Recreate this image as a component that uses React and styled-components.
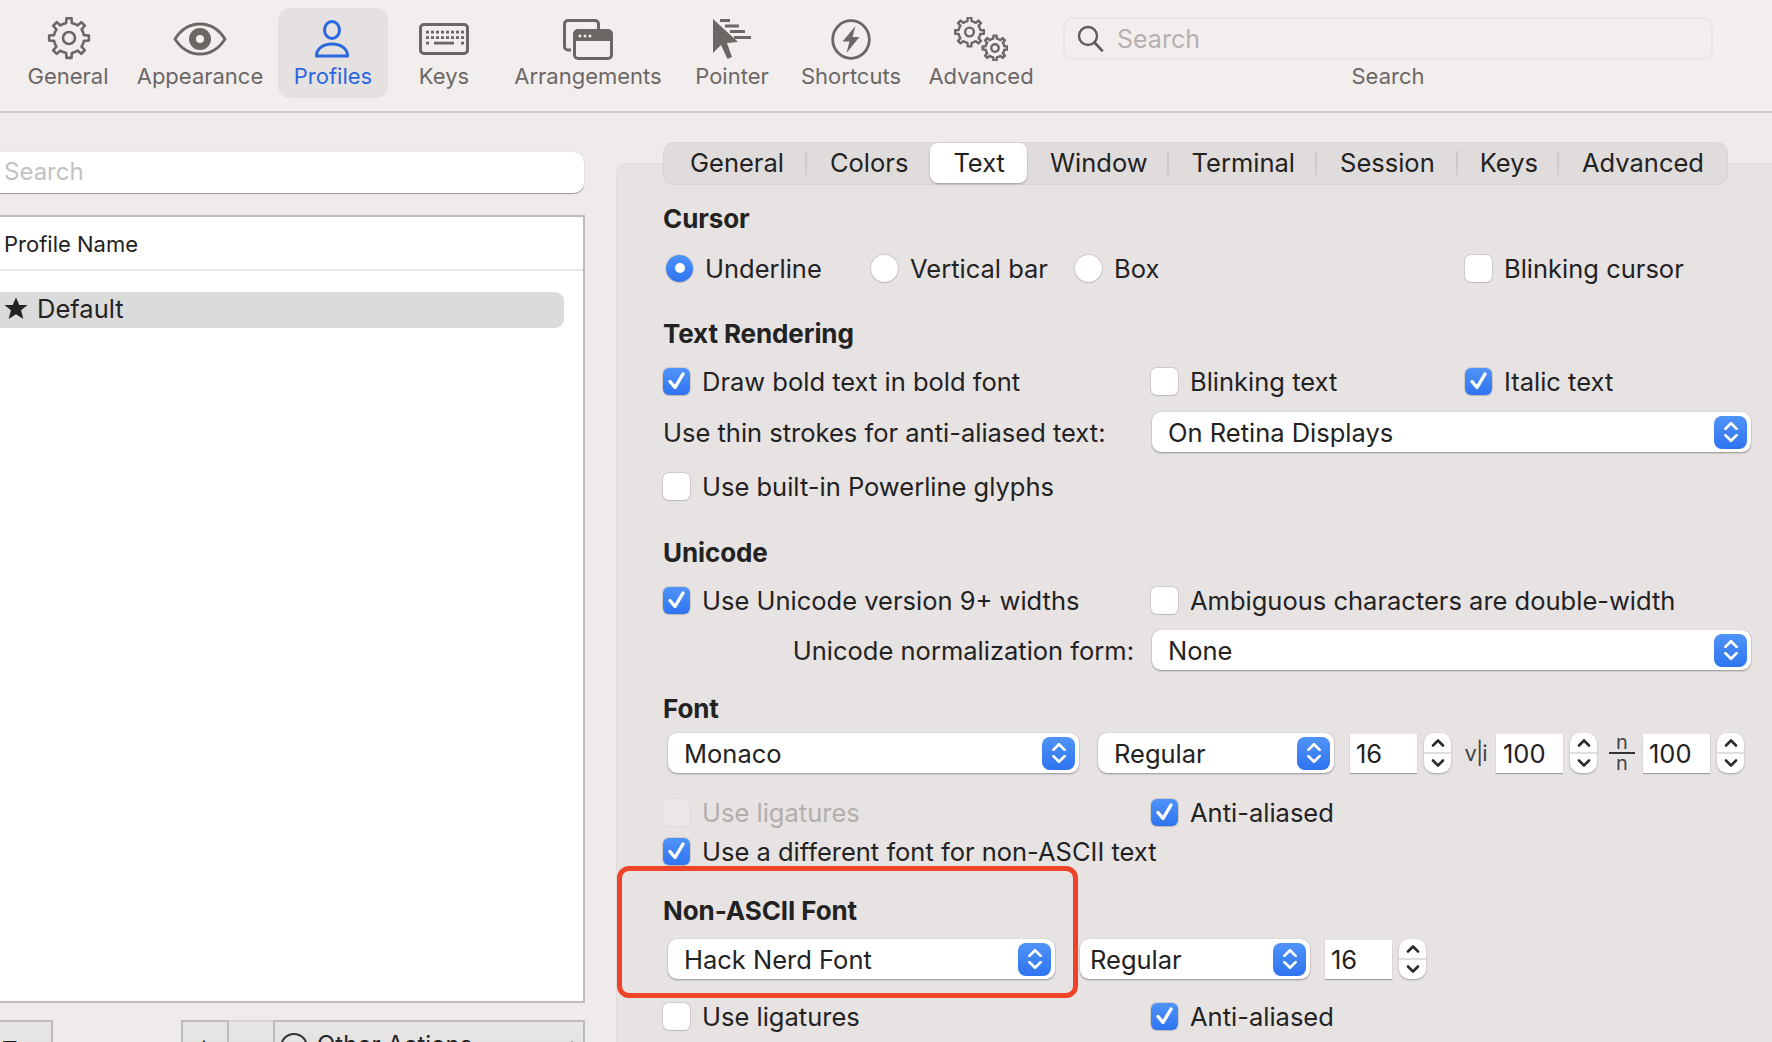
import React from "react";
import styled, { createGlobalStyle } from "styled-components";

const GlobalStyle = createGlobalStyle`
  html, body { margin: 0; padding: 0; background: #efebea; }
  * { box-sizing: border-box; }
`;

const Page = styled.div`
  width: 1772px;
  height: 1042px;
  overflow: hidden;
  display: flex;
  flex-direction: column;
  background: #efebea;
  color: #232222;
  font-family: Inter, "Noto Sans", sans-serif;
  font-size: 25.5px;
`;

const Toolbar = styled.div`
  height: 113px;
  flex: none;
  display: flex;
  padding: 8px 0 0 8px;
  background: #f3eeee;
  border-bottom: 2px solid #d0cccb;
`;

const ToolItem = styled.div`
  width: ${(p) => p.$w}px;
  margin-left: ${(p) => p.$ml || 0}px;
  height: 90px;
  display: flex;
  flex-direction: column;
  align-items: center;
  border-radius: 12px;
  background: ${(p) => (p.$active ? "#e6e1e1" : "transparent")};
  color: ${(p) => (p.$active ? "#2a68e0" : "#6b6765")};
  font-size: 22px;
`;

const ToolIcon = styled.div`
  height: 54px;
  padding-top: 8px;
  display: flex;
  align-items: center;
  justify-content: center;
`;

const ToolLabel = styled.div`
  line-height: 28px;
  white-space: nowrap;
`;

const ToolSearch = styled.div`
  width: 650px;
  margin-left: 15px;
  display: flex;
  flex-direction: column;
  align-items: center;
  padding-top: 9px;
  color: #6b6765;
  font-size: 22px;
`;

const ToolSearchField = styled.div`
  width: 100%;
  height: 43px;
  display: flex;
  align-items: center;
  gap: 13px;
  padding-left: 12px;
  border: 2px solid #e9e5e4;
  border-radius: 9px;
  color: #b5b1b0;
  font-size: 25px;
  margin-bottom: 2px;
`;

const Main = styled.div`
  flex: 1;
  display: flex;
  min-height: 0;
`;

const Sidebar = styled.div`
  width: 585px;
  flex: none;
  padding-top: 39px;
  display: flex;
  flex-direction: column;
`;

const SideSearch = styled.div`
  height: 41px;
  flex: none;
  padding: 0 0 2px 4px;
  display: flex;
  align-items: center;
  background: #fff;
  border-radius: 0 10px 10px 0;
  box-shadow: 0 1px 1px rgba(0, 0, 0, 0.35), 0 0 1px rgba(0, 0, 0, 0.15);
  color: #c3c1c0;
  width: 584px;
  font-size: 24px;
`;

const ProfileTable = styled.div`
  margin-top: 22px;
  height: 788px;
  flex: none;
  background: #fff;
  border: 2px solid #bdbcbb;
  border-left: none;
`;

const TableHead = styled.div`
  height: 54px;
  padding: 2px 0 0 4px;
  display: flex;
  align-items: center;
  border-bottom: 2px solid #e6e6e6;
  font-size: 22px;
`;

const ProfileRow = styled.div`
  margin: 21px 19px 0 0;
  height: 36px;
  padding: 0 0 3px 4px;
  display: flex;
  align-items: center;
  gap: 9px;
  background: #dbdbdb;
  border-radius: 0 9px 9px 0;
  font-size: 25.5px;
`;

const BottomBar = styled.div`
  margin-top: 17px;
  flex: none;
  display: flex;
`;

const BarButton = styled.div`
  width: ${(p) => p.$w}px;
  margin-left: ${(p) => p.$ml || 0}px;
  height: 40px;
  flex: none;
  display: flex;
  align-items: flex-start;
  gap: 9px;
  padding: ${(p) => p.$top || 8}px 0 0 ${(p) => p.$pad || 0}px;
  background: linear-gradient(#e9e7e6, #e2e0df);
  border: 2px solid #bdbcbb;
  border-top-color: ${(p) => (p.$disabled ? "#d6d4d3" : "#bdbcbb")};
  border-left-width: ${(p) => (p.$noLeft ? 0 : 2)}px;
  border-right-width: ${(p) => (p.$noRight ? 0 : 2)}px;
  white-space: nowrap;
  font-size: 24px;
`;

const BarRing = styled.span`
  width: 28px;
  height: 28px;
  margin-top: 3px;
  border: 2px solid #333;
  border-radius: 50%;
  flex: none;
`;

const BarChevron = styled.span`
  margin: 9px 5px 0 auto;
  display: flex;
`;

const Panel = styled.div`
  flex: 1;
  margin: 50px 0 0 31px;
  padding-left: 46px;
  background: #e7e3e2;
  border: 1px solid #e0dcdb;
  border-bottom: none;
  border-right: none;
  border-radius: 10px 0 0 0;
`;

const Tabs = styled.div`
  width: 1065px;
  height: 43px;
  margin-top: -22px;
  padding: 0 0 2px 3px;
  display: flex;
  align-items: center;
  background: #e0dcdb;
  border: 1px solid #d9d5d4;
  border-radius: 11px;
`;

const Tab = styled.div`
  height: 40px;
  padding: 0 ${(p) => p.$r}px 0 ${(p) => p.$l}px;
  display: flex;
  align-items: center;
  background: ${(p) => (p.$active ? "#fff" : "transparent")};
  border-radius: 8px;
  box-shadow: ${(p) => (p.$active ? "0 1px 2px rgba(0,0,0,.3)" : "none")};
  border-right: ${(p) => (p.$sep ? "2px solid #cfcbca" : "none")};
  background-clip: padding-box;
  ${(p) => p.$sep && "border-radius: 0; height: 24px;"}
`;

const Heading = styled.div`
  height: 30px;
  margin-top: ${(p) => p.$mt}px;
  display: flex;
  align-items: center;
  font-weight: 700;
  font-size: 26px;
  letter-spacing: -0.1px;
`;

const Row = styled.div`
  height: 30px;
  margin-top: ${(p) => p.$mt}px;
  display: grid;
  grid-template-columns: ${(p) => p.$cols || "488px 314px 1fr"};
  grid-template-rows: 30px;
  padding-left: ${(p) => p.$pl || 0}px;
  align-items: center;
`;

const FlexRow = styled.div`
  height: 30px;
  margin-top: ${(p) => p.$mt}px;
  padding-left: 5px;
  display: flex;
  align-items: center;
`;

const Option = styled.div`
  display: flex;
  align-items: center;
  gap: ${(p) => p.$gap || 12}px;
  white-space: nowrap;
  color: ${(p) => (p.$dim ? "#b2aeae" : "inherit")};
`;

const Box = styled.span`
  width: 27px;
  height: 27px;
  flex: none;
  display: flex;
  align-items: center;
  justify-content: center;
  border-radius: 6px;
  background: ${(p) =>
    p.$on ? "linear-gradient(#4f93f8, #2f74f0)" : p.$dim ? "#ebe8e7" : "#fff"};
  box-shadow: ${(p) =>
    p.$dim ? "0 0 0 1px #dedbda" : "0 0 0 1px rgba(0,0,0,.1), 0 1px 1px rgba(0,0,0,.1)"};
`;

const Radio = styled(Box)`
  border-radius: 50%;
  background: ${(p) => (p.$on ? "linear-gradient(#4f93f8, #2f74f0)" : "#fff")};
  &::after {
    content: "";
    display: ${(p) => (p.$on ? "block" : "none")};
    width: 10px;
    height: 10px;
    background: #fff;
    border-radius: 50%;
  }
`;

const SelectBox = styled.div`
  width: ${(p) => p.$w}px;
  margin-left: ${(p) => p.$ml || 0}px;
  height: 40px;
  flex: none;
  display: flex;
  align-items: center;
  justify-content: space-between;
  padding: 0 4px 0 ${(p) => p.$pad || 16}px;
  background: #fff;
  border-radius: 9px;
  box-shadow: 0 1px 2px rgba(0, 0, 0, 0.35), 0 0 1px rgba(0, 0, 0, 0.2);
  white-space: nowrap;
`;

const SelectArrows = styled.span`
  width: 33px;
  height: 33px;
  flex: none;
  display: flex;
  align-items: center;
  justify-content: center;
  border-radius: 8px;
  background: linear-gradient(#4f93f8, #2f74f0);
`;

const NumField = styled.div`
  width: 67px;
  height: 39px;
  margin-left: ${(p) => p.$ml}px;
  flex: none;
  display: flex;
  align-items: center;
  padding-left: ${(p) => p.$pad || 6}px;
  background: #fff;
  box-shadow: 0 1px 1px rgba(0, 0, 0, 0.3);
`;

const Stepper = styled.div`
  width: 27px;
  height: 40px;
  margin-left: 7px;
  flex: none;
  display: flex;
  flex-direction: column;
  background: #fff;
  border-radius: 10px;
  box-shadow: 0 1px 2px rgba(0, 0, 0, 0.3);
`;

const StepHalf = styled.span`
  flex: 1;
  display: flex;
  align-items: center;
  justify-content: center;
  & + & { border-top: 2px solid #dedede; }
`;

const SpacingGlyph = styled.span`
  width: 27px;
  margin-left: ${(p) => p.$ml}px;
  flex: none;
  text-align: center;
  font-size: 22px;
  color: #444;
  white-space: nowrap;
  letter-spacing: -1px;
`;

const Fraction = styled.span`
  width: 26px;
  margin-left: ${(p) => p.$ml}px;
  flex: none;
  display: flex;
  flex-direction: column;
  align-items: center;
  font-size: 20px;
  line-height: 17px;
  color: #444;
`;

const FractionTop = styled.span`
  width: 100%;
  text-align: center;
  border-bottom: 2px solid #333;
  padding-bottom: 1px;
  margin-bottom: 1px;
`;

const RightLabel = styled.div`
  text-align: right;
  padding-right: 18px;
  white-space: nowrap;
`;

const Highlighted = styled.div`
  position: relative;
  margin-top: 29px;
`;

const RedFrame = styled.div`
  position: absolute;
  left: -46px;
  top: -29px;
  width: 461px;
  height: 132px;
  border: 5px solid #ee4229;
  border-radius: 12px;
  pointer-events: none;
`;

const gearPath = (cx, cy, rOut, rIn, teeth) => {
  const pts = [];
  const step = (Math.PI * 2) / teeth;
  for (let i = 0; i < teeth; i++) {
    const a = i * step - Math.PI / 2;
    [
      [-0.5, rIn],
      [-0.24, rIn],
      [-0.16, rOut],
      [0.16, rOut],
      [0.24, rIn],
    ].forEach(([d, r]) => {
      pts.push(`${(cx + Math.cos(a + d * step) * r).toFixed(2)} ${(cy + Math.sin(a + d * step) * r).toFixed(2)}`);
    });
  }
  return `M${pts.join("L")}Z`;
};

const ICON = "#6b6765";

const Gear = ({ cx, cy, r, sw = 2.6 }) => (
  <>
    <path d={gearPath(cx, cy, r, r * 0.76, 8)} fill="none" stroke={ICON} strokeWidth={sw} strokeLinejoin="round" />
    <circle cx={cx} cy={cy} r={r * 0.3} fill="none" stroke={ICON} strokeWidth={sw} />
  </>
);

const GeneralIcon = () => (
  <svg width="46" height="44" viewBox="0 0 46 44">
    <Gear cx={24} cy={21} r={20} />
  </svg>
);

const EyeIcon = () => (
  <svg width="54" height="34" viewBox="0 0 54 34">
    <path d="M2 17C9 6 18 2 27 2s18 4 25 15c-7 11-16 15-25 15S9 28 2 17Z" fill="none" stroke={ICON} strokeWidth="2.8" strokeLinejoin="round" />
    <circle cx="27" cy="17" r="11" fill={ICON} />
    <circle cx="27" cy="17" r="4" fill="#f3eeee" />
  </svg>
);

const PersonIcon = () => (
  <svg width="36" height="38" viewBox="0 0 36 38">
    <ellipse cx="17" cy="10" rx="7.5" ry="8.5" fill="none" stroke="#2a68e0" strokeWidth="3" />
    <path d="M1.5 36c0-7 6-12 15.500-12s15.500 5 15.500 12Z" fill="none" stroke="#2a68e0" strokeWidth="3" strokeLinejoin="round" />
  </svg>
);

const KeyboardIcon = () => {
  const dots = [];
  [9, 14.5, 20].forEach((y, r) => {
    for (let i = 0; i < 8; i++) {
      if (r === 2 && i > 0 && i < 7) continue;
      dots.push(<rect key={`${r}-${i}`} x={7 + i * 5} y={y - 1.3} width="3" height="2.8" fill={ICON} />);
    }
  });
  return (
    <svg width="50" height="32" viewBox="0 0 50 32">
      <rect x="1.500" y="1.500" width="47" height="29" rx="3.500" fill="none" stroke={ICON} strokeWidth="3" />
      {dots}
      <rect x="15" y="18.700" width="20" height="2.800" fill={ICON} />
    </svg>
  );
};

const ArrangeIcon = () => (
  <svg width="50" height="41" viewBox="0 0 50 41">
    <path d="M8 31H5a3.500 3.500 0 0 1-3.500-3.500V5A3.500 3.500 0 0 1 5 1.500h27A3.500 3.500 0 0 1 35.500 5v5" fill="none" stroke={ICON} strokeWidth="3" />
    <rect x="11.500" y="11.500" width="37" height="28" rx="3.500" fill="none" stroke={ICON} strokeWidth="3" />
    <path d="M11.500 15a3.500 3.500 0 0 1 3.500-3.500h30a3.500 3.500 0 0 1 3.500 3.500v7h-37Z" fill={ICON} />
    <circle cx="17" cy="17" r="1.500" fill="#f3eeee" />
    <circle cx="22" cy="17" r="1.500" fill="#f3eeee" />
    <circle cx="27" cy="17" r="1.500" fill="#f3eeee" />
  </svg>
);

const PointerIcon = () => (
  <svg width="40" height="42" viewBox="0 0 40 42">
    <path d="M1 1L1 35L9 27L15.500 41L20 39L15 25L26 24Z" fill={ICON} />
    <path d="M8 2.500H18M13 8H27M18 13.500H33M22 19.500H39" stroke={ICON} strokeWidth="2.800" fill="none" />
  </svg>
);

const BoltIcon = () => (
  <svg width="40" height="41" viewBox="0 0 40 41">
    <ellipse cx="20" cy="20.500" rx="18.300" ry="18.800" fill="none" stroke={ICON} strokeWidth="2.800" />
    <path d="M24.500 7L11.500 22.500H18.500L15.500 34L28.500 18H21.500Z" fill={ICON} />
  </svg>
);

const AdvancedIcon = () => (
  <svg width="54" height="44" viewBox="0 0 54 44">
    <Gear cx={15.500} cy={15} r={14.500} sw={2.400} />
    <Gear cx={41} cy={31} r={12.500} sw={2.400} />
  </svg>
);

const SearchGlyph = () => (
  <svg width="27" height="27" viewBox="0 0 27 27">
    <circle cx="11" cy="11" r="9" fill="none" stroke="#5f5c5b" strokeWidth="2.400" />
    <path d="M17.500 17.500L25 25.500" stroke="#5f5c5b" strokeWidth="2.600" strokeLinecap="round" />
  </svg>
);

const Star = () => (
  <svg width="24" height="23" viewBox="0 0 24 23">
    <path d="M12 0.500L15.300 8H23.500L17 13.300L19.400 22L12 17.300L4.600 22L7 13.300L0.500 8H8.700Z" fill="#232222" />
  </svg>
);

const Check = () => (
  <svg width="19" height="20" viewBox="0 0 19 20">
    <path d="M3 10.500L8 16.500L16 3" fill="none" stroke="#fff" strokeWidth="3.400" strokeLinecap="round" strokeLinejoin="round" />
  </svg>
);

const Chevron = ({ up, color = "#fff", w = 16, sw = 2.400 }) => (
  <svg width={w} height="9" viewBox="0 0 14 8">
    <path d={up ? "M2 7L7 2L12 7" : "M2 1L7 6L12 1"} fill="none" stroke={color} strokeWidth={sw} strokeLinecap="round" strokeLinejoin="round" />
  </svg>
);

const Arrows = styled.span`
  display: flex;
  flex-direction: column;
  gap: 4px;
`;

const Select = ({ value, w, ml, pad }) => (
  <SelectBox $w={w} $ml={ml} $pad={pad}>
    {value}
    <SelectArrows>
      <Arrows>
        <Chevron up />
        <Chevron />
      </Arrows>
    </SelectArrows>
  </SelectBox>
);

const StepButtons = () => (
  <Stepper>
    <StepHalf>
      <Chevron up color="#2c2c2c" w={14} sw={2.600} />
    </StepHalf>
    <StepHalf>
      <Chevron color="#2c2c2c" w={14} sw={2.600} />
    </StepHalf>
  </Stepper>
);

const CheckOption = ({ on, dim, children }) => (
  <Option $dim={dim}>
    <Box $on={on} $dim={dim}>
      {on && <Check />}
    </Box>
    {children}
  </Option>
);

const RadioOption = ({ on, children }) => (
  <Option $gap={12}>
    <Radio $on={on} />
    {children}
  </Option>
);

const toolItems = [
  { label: "General", w: 120, icon: <GeneralIcon /> },
  { label: "Appearance", w: 144, icon: <EyeIcon /> },
  { label: "Profiles", w: 110, ml: 6, active: true, icon: <PersonIcon /> },
  { label: "Keys", w: 112, icon: <KeyboardIcon /> },
  { label: "Arrangements", w: 176, icon: <ArrangeIcon /> },
  { label: "Pointer", w: 112, icon: <PointerIcon /> },
  { label: "Shortcuts", w: 126, icon: <BoltIcon /> },
  { label: "Advanced", w: 134, icon: <AdvancedIcon /> },
];

const tabs = [
  { label: "General", sep: true, l: 23, r: 21 },
  { label: "Colors", l: 23, r: 22 },
  { label: "Text", active: true, l: 23, r: 22 },
  { label: "Window", sep: true, l: 23, r: 19 },
  { label: "Terminal", sep: true, l: 23, r: 20 },
  { label: "Session", sep: true, l: 23, r: 21 },
  { label: "Keys", sep: true, l: 22, r: 19 },
  { label: "Advanced", l: 23, r: 10 },
];

export default function App() {
  return (
    <Page>
      <GlobalStyle />
      <Toolbar>
        {toolItems.map((item) => (
          <ToolItem key={item.label} $w={item.w} $ml={item.ml} $active={item.active}>
            <ToolIcon>{item.icon}</ToolIcon>
            <ToolLabel>{item.label}</ToolLabel>
          </ToolItem>
        ))}
        <ToolSearch>
          <ToolSearchField>
            <SearchGlyph />
            Search
          </ToolSearchField>
          <ToolLabel>Search</ToolLabel>
        </ToolSearch>
      </Toolbar>
      <Main>
        <Sidebar>
          <SideSearch>Search</SideSearch>
          <ProfileTable>
            <TableHead>Profile Name</TableHead>
            <ProfileRow>
              <Star />
              Default
            </ProfileRow>
          </ProfileTable>
          <BottomBar>
            <BarButton $w={53} $noLeft $pad={2} $top={14}>Tags &gt;</BarButton>
            <BarButton $w={46} $ml={128} $pad={13} $noRight>+</BarButton>
            <BarButton $w={46} $noRight $pad={13} $disabled>−</BarButton>
            <BarButton $w={312} $pad={5}>
              <BarRing />
              Other Actions...
              <BarChevron>
                <Chevron up color="#8a8887" w={12} sw={1.800} />
              </BarChevron>
            </BarButton>
          </BottomBar>
        </Sidebar>
        <Panel>
          <Tabs>
            {tabs.map((t) => (
              <Tab key={t.label} $active={t.active} $sep={t.sep} $l={t.l} $r={t.r}>
                {t.label}
              </Tab>
            ))}
          </Tabs>
          <Heading $mt={18}>Cursor</Heading>
          <Row $mt={20} $pl={3} $cols="205px 204px 390px 1fr">
            <RadioOption on>Underline</RadioOption>
            <RadioOption>Vertical bar</RadioOption>
            <RadioOption>Box</RadioOption>
            <CheckOption>Blinking cursor</CheckOption>
          </Row>

          <Heading $mt={35}>Text Rendering</Heading>
          <Row $mt={18}>
            <CheckOption on>Draw bold text in bold font</CheckOption>
            <CheckOption>Blinking text</CheckOption>
            <CheckOption on>Italic text</CheckOption>
          </Row>
          <Row $mt={21} $cols="489px 599px">
            <span>Use thin strokes for anti-aliased text:</span>
            <Select value="On Retina Displays" w={599} />
          </Row>
          <Row $mt={24}>
            <CheckOption>Use built-in Powerline glyphs</CheckOption>
          </Row>

          <Heading $mt={36}>Unicode</Heading>
          <Row $mt={18}>
            <CheckOption on>Use Unicode version 9+ widths</CheckOption>
            <CheckOption>Ambiguous characters are double-width</CheckOption>
          </Row>
          <Row $mt={20} $cols="489px 599px">
            <RightLabel>Unicode normalization form:</RightLabel>
            <Select value="None" w={599} />
          </Row>

          <Heading $mt={28}>Font</Heading>
          <FlexRow $mt={15}>
            <Select value="Monaco" w={411} />
            <Select value="Regular" w={236} ml={19} />
            <NumField $ml={16}>16</NumField>
            <StepButtons />
            <SpacingGlyph $ml={11}>v|i</SpacingGlyph>
            <NumField $ml={7} $pad={7}>100</NumField>
            <StepButtons />
            <Fraction $ml={12}>
              <FractionTop>n</FractionTop>
              n
            </Fraction>
            <NumField $ml={8}>100</NumField>
            <StepButtons />
          </FlexRow>
          <Row $mt={29}>
            <CheckOption dim>Use ligatures</CheckOption>
            <CheckOption on>Anti-aliased</CheckOption>
          </Row>
          <Row $mt={9}>
            <CheckOption on>Use a different font for non-ASCII text</CheckOption>
          </Row>

          <Highlighted>
            <Heading $mt={0}>Non-ASCII Font</Heading>
            <FlexRow $mt={19}>
              <Select value="Hack Nerd Font" w={387} />
              <Select value="Regular" w={230} ml={25} pad={10} />
              <NumField $ml={15}>16</NumField>
              <StepButtons />
            </FlexRow>
            <RedFrame />
          </Highlighted>
          <Row $mt={27}>
            <CheckOption>Use ligatures</CheckOption>
            <CheckOption on>Anti-aliased</CheckOption>
          </Row>
        </Panel>
      </Main>
    </Page>
  );
}
